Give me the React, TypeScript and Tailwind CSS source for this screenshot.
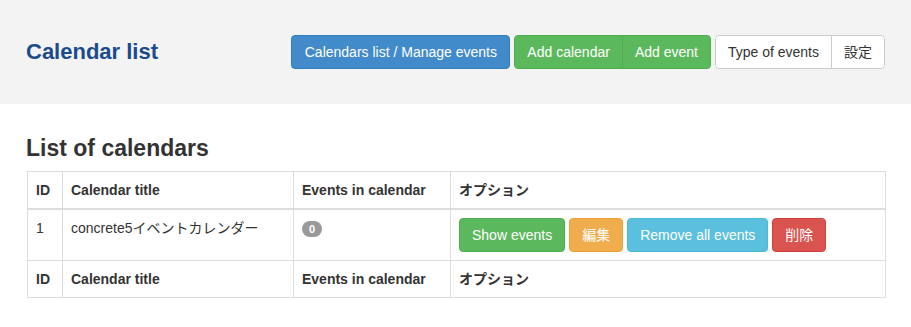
import React from 'react'

const btn = 'inline-block px-3 py-[6px] text-[14px] leading-5 border rounded'

function HeaderRow() {
  return (
    <tr>
      <th className="w-[35px] border border-[#ddd] p-2 text-left font-bold">ID</th>
      <th className="w-[231px] border border-[#ddd] p-2 text-left font-bold">Calendar title</th>
      <th className="w-[157px] border border-[#ddd] p-2 text-left font-bold">Events in calendar</th>
      <th className="border border-[#ddd] p-2 text-left font-bold">オプション</th>
    </tr>
  )
}

export default function App() {
  return (
    <div
      className="min-h-[327px] bg-white text-[14px] leading-5 text-[#333]"
      style={{ fontFamily: '"Liberation Sans", Arial, "Noto Sans CJK JP", sans-serif' }}
    >
      <div className="flex h-[104px] items-center justify-between bg-[#f3f3f3] px-[26px]">
        <h1 className="text-[22px] font-bold text-[#1b4b8c]">Calendar list</h1>
        <div className="flex items-center gap-[4px]">
          <button className={`${btn} w-[219px] border-[#357ebd] bg-[#428bca] text-white`}>
            Calendars list / Manage events
          </button>
          <div className="flex">
            <button className={`${btn} rounded-r-none border-[#4cae4c] bg-[#5cb85c] text-white`}>
              Add calendar
            </button>
            <button className={`${btn} -ml-px rounded-l-none border-[#4cae4c] bg-[#5cb85c] text-white`}>
              Add event
            </button>
          </div>
          <div className="flex">
            <button className={`${btn} rounded-r-none border-[#ccc] bg-white text-[#333]`}>
              Type of events
            </button>
            <button className={`${btn} -ml-px rounded-l-none border-[#ccc] bg-white text-[#333]`}>
              設定
            </button>
          </div>
        </div>
      </div>

      <div className="px-[26px] pt-[31px]">
        <h3 className="mb-[10px] text-[23px] leading-[26px] font-bold text-[#333]">List of calendars</h3>
        <table className="ml-px w-[859px] table-fixed border-collapse">
          <thead className="[&_th]:border-b-2">
            <HeaderRow />
          </thead>
          <tbody>
            <tr>
              <td className="border border-[#ddd] p-2 align-top">1</td>
              <td className="border border-[#ddd] p-2 align-top">concrete5イベントカレンダー</td>
              <td className="border border-[#ddd] p-2 align-top">
                <span className="mt-[2px] inline-block h-4 min-w-[20px] rounded-[10px] bg-[#999] px-[7px] text-center text-[11px] leading-4 font-bold text-white">
                  0
                </span>
              </td>
              <td className="border border-[#ddd] p-2 align-top">
                <div className="flex gap-[4px]">
                  <button className={`${btn} border-[#4cae4c] bg-[#5cb85c] text-white`}>Show events</button>
                  <button className={`${btn} border-[#eea236] bg-[#f0ad4e] text-white`}>編集</button>
                  <button className={`${btn} border-[#46b8da] bg-[#5bc0de] text-white`}>Remove all events</button>
                  <button className={`${btn} border-[#d43f3a] bg-[#d9534f] text-white`}>削除</button>
                </div>
              </td>
            </tr>
          </tbody>
          <tfoot>
            <HeaderRow />
          </tfoot>
        </table>
      </div>
    </div>
  )
}
